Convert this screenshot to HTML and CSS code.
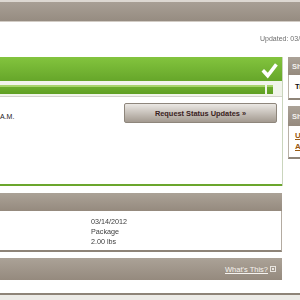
FILE: index.html
```html
<!DOCTYPE html>
<html lang="en">
<head>
<meta charset="utf-8">
<title>Tracking Detail</title>
<link rel="stylesheet" href="styles.css">
</head>
<body>
<div class="topstrip"></div>
<div class="navbar"></div>
<div class="navline"></div>
<div class="updated"><span class="gray-text">Updated: 03/14/2012 10:42 A.M. Eastern Time</span></div>
<div class="layout">
  <div class="main">
    <section class="status">
      <div class="status-head">
        <svg class="check" width="17" height="16" viewBox="0 0 17 16" aria-hidden="true">
          <polygon points="0.5,8.5 3,6 6.8,9.8 14,0.3 16.8,2.6 6.8,15.5" fill="#ffffff"/>
        </svg>
      </div>
      <div class="band"></div>
      <div class="progress">
        <div class="fill"></div>
        <div class="seg"></div>
      </div>
      <div class="band2"></div>
      <div class="rule"></div>
      <div class="status-body">
        <div class="time">A.M.</div>
        <button class="btn" type="button">Request Status Updates »</button>
      </div>
    </section>

    <section class="panel details">
      <div class="panel-head"></div>
      <div class="panel-body">
        <div class="gray-text">03/14/2012</div>
        <div class="gray-text">Package</div>
        <div class="gray-text">2.00 lbs</div>
      </div>
    </section>

    <section class="panel whats">
      <div class="panel-head">
        <a class="help" href="#">What's This?</a>
        <svg class="help-icon" width="6" height="6" viewBox="0 0 6 6" aria-hidden="true">
          <rect x="0.5" y="0.5" width="5" height="5" fill="none" stroke="#e8e4df" stroke-width="1"/>
          <rect x="2" y="2" width="2" height="2" fill="#e8e4df"/>
        </svg>
      </div>
      <div class="panel-foot"></div>
    </section>
  </div>

  <aside class="side">
    <div class="side-box box1">
      <div class="side-head">Shipment Progress</div>
      <div class="side-body"><span class="track">Track Another Package</span></div>
    </div>
    <div class="side-box box2">
      <div class="side-head">Share</div>
      <div class="side-body">
        <a class="side-link" href="#">Update Delivery</a>
        <a class="side-link" href="#">Alert Settings</a>
      </div>
    </div>
  </aside>
</div>
<div class="footer-line"></div>
</body>
</html>
```
FILE: styles.css
```css
* { box-sizing: border-box; }
html, body { margin: 0; padding: 0; overflow: hidden; }
body {
  width: 300px;
  height: 300px;
  background: #ffffff;
  font-family: "Liberation Sans", Arial, sans-serif;
  color: #333333;
}
.gray-text { filter: grayscale(100%); }
.topstrip { height: 2px; background: #ddd8d2; }
.navbar { height: 19px; background: linear-gradient(#a89f95, #968c81); }
.navline { height: 1px; background: #d2ccc5; }
.updated {
  height: 35px;
  padding: 12px 0 0 260px;
  font-size: 7px;
  line-height: 10px;
  color: #6e6e6e;
  white-space: nowrap;
}
.updated .gray-text { display: inline-block; }
.layout {
  display: grid;
  grid-template-columns: 283px 150px;
  column-gap: 5px;
  align-items: start;
  width: 438px;
}
.main { display: flex; flex-direction: column; height: 236px; }

.status {
  height: 129px;
  border-right: 1px solid #cad5bd;
  display: flex;
  flex-direction: column;
}
.status-head {
  height: 24px;
  flex: none;
  background: linear-gradient(#83c43e, #66a62a);
  display: flex;
  justify-content: flex-end;
  align-items: flex-start;
  padding: 6px 4px 0 0;
}
.band { height: 4px; flex: none; background: #f1f4eb; }
.progress { height: 9px; flex: none; display: flex; gap: 2px; background: #f1f4eb; }
.progress .fill, .progress .seg {
  background: linear-gradient(#a7d46b 0, #a7d46b 22%, #6cad2d 22%, #5f9f23 100%);
}
.progress .fill { width: 265px; }
.progress .seg { width: 6px; }
.band2 { height: 2px; flex: none; background: #f1f4eb; }
.rule { height: 1px; flex: none; background: #d3d3cc; }
.status-body {
  flex: 1;
  display: flex;
  justify-content: space-between;
  align-items: flex-start;
  padding: 6px 5px 0 0;
  border-bottom: 2px solid #6ba62d;
}
.time { margin-top: 8.5px; font-size: 7px; line-height: 10px; color: #222222; }
.btn {
  width: 153px;
  height: 20px;
  padding: 0;
  border: 1px solid #8e867c;
  border-radius: 2px;
  background: linear-gradient(#ebe8e4, #a39a90);
  font-family: inherit;
  font-size: 7.4px;
  font-weight: bold;
  color: #3a2222;
  display: flex;
  align-items: center;
  justify-content: center;
}

.panel { width: 282px; }
.panel-head { background: linear-gradient(#aba297, #958a7e); }
.details { margin-top: 7px; }
.details .panel-head { height: 18px; }
.details .panel-body {
  height: 41px;
  border-right: 1px solid #b3aba1;
  border-bottom: 2px solid #8e8478;
  padding: 6px 0 0 91px;
  font-size: 7.2px;
  line-height: 10px;
  color: #3c3c3c;
}
.whats { margin-top: 6px; }
.whats .panel-head {
  height: 22px;
  display: flex;
  justify-content: flex-end;
  align-items: center;
  padding-right: 6px;
  gap: 2px;
}
.help { color: #f6f3ef; font-size: 7.5px; text-decoration: underline; }
.help-icon { display: block; }
.panel-foot { height: 13px; }

.side { display: flex; flex-direction: column; gap: 6px; }
.side-head {
  height: 18px;
  background: linear-gradient(#aba297, #958a7e);
  color: #f3f0ec;
  font-weight: bold;
  font-size: 7.5px;
  padding-left: 4px;
  display: flex;
  align-items: center;
  white-space: nowrap;
}
.box2 .side-head { height: 20px; }
.side-body {
  border-left: 1px solid #bab2a8;
  border-bottom: 2px solid #8e8478;
  padding-left: 6px;
  white-space: nowrap;
}
.box1 .side-body { height: 25px; padding-top: 7px; }
.track { font-size: 7.5px; line-height: 10px; font-weight: bold; color: #111111; display: block; }
.box2 .side-body { height: 33px; padding-top: 4px; }
.side-link {
  display: block;
  font-size: 8px;
  line-height: 11px;
  font-weight: bold;
  color: #9a5a10;
  text-decoration: underline;
}
.footer-line { height: 8px; border-top: 2px solid #8e8478; background: #ecebe7; }
```
